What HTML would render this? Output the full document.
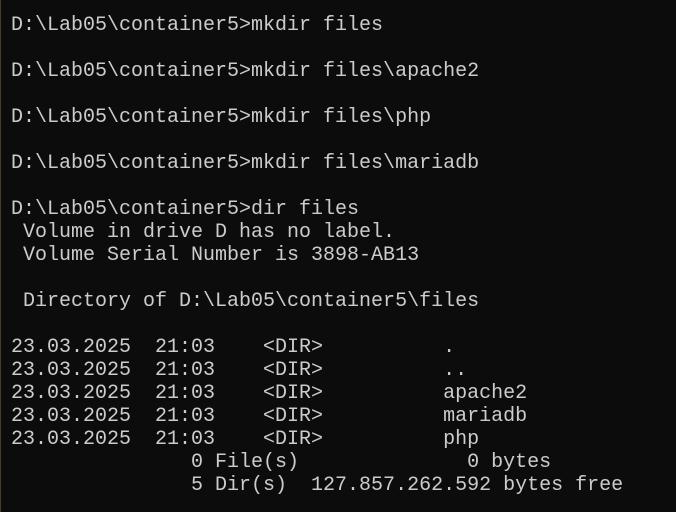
<!DOCTYPE html>
<html><head><meta charset="utf-8"><style>
html,body{margin:0;padding:0;background:#0c0c0c;width:676px;height:512px;overflow:hidden}
body{border-left:1px solid #4a3b2e;box-sizing:border-box}
pre{margin:0;position:absolute;left:11px;top:14px;font-family:"Liberation Mono","DejaVu Sans Mono",monospace;font-size:20px;line-height:23px;color:#cccccc;white-space:pre}
</style></head><body><pre>D:\Lab05\container5>mkdir files

D:\Lab05\container5>mkdir files\apache2

D:\Lab05\container5>mkdir files\php

D:\Lab05\container5>mkdir files\mariadb

D:\Lab05\container5>dir files
 Volume in drive D has no label.
 Volume Serial Number is 3898-AB13

 Directory of D:\Lab05\container5\files

23.03.2025  21:03    &lt;DIR&gt;          .
23.03.2025  21:03    &lt;DIR&gt;          ..
23.03.2025  21:03    &lt;DIR&gt;          apache2
23.03.2025  21:03    &lt;DIR&gt;          mariadb
23.03.2025  21:03    &lt;DIR&gt;          php
               0 File(s)              0 bytes
               5 Dir(s)  127.857.262.592 bytes free</pre></body></html>
